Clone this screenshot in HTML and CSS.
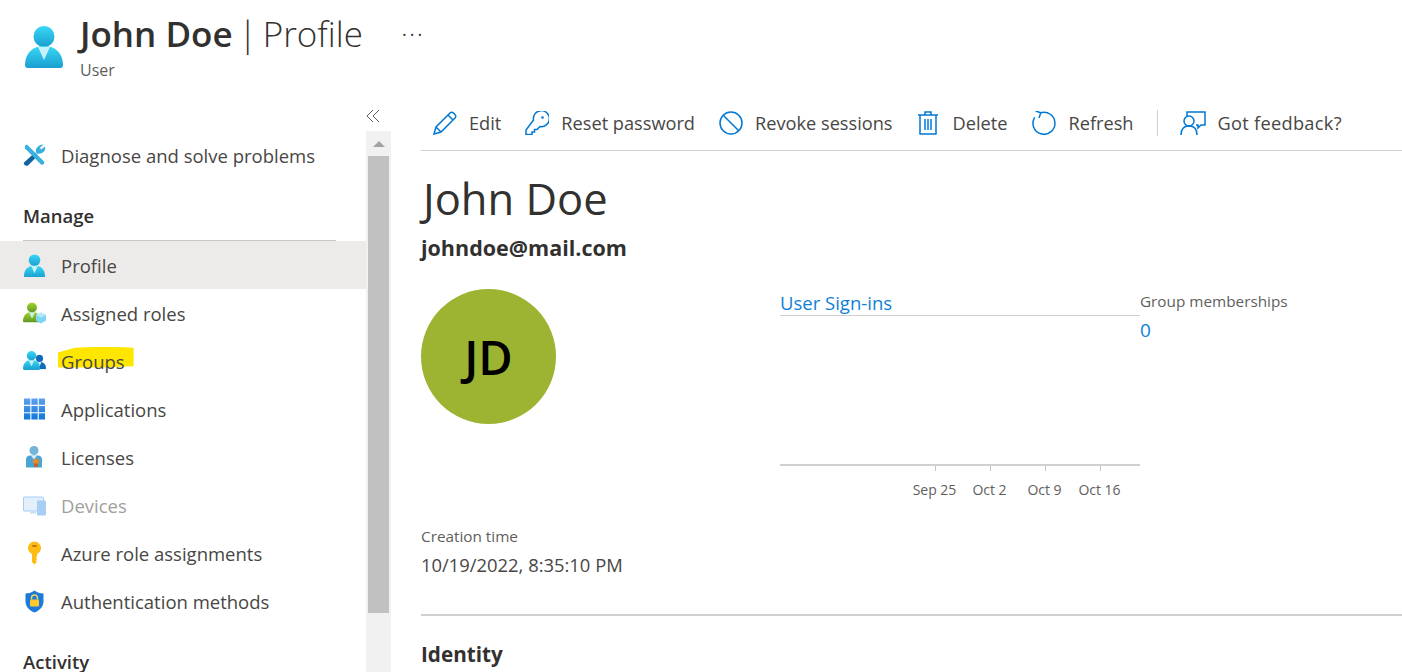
FILE: index.html
```html
<!DOCTYPE html>
<html lang="en">
<head>
    <meta charset="UTF-8">
    <meta name="viewport" content="width=device-width, initial-scale=1.0">
    <title>John Doe | Profile</title>
    <link rel="stylesheet" href="styles.css">
</head>
<body>
    <svg class="defs" width="0" height="0" aria-hidden="true">
        <defs>
            <linearGradient id="blue-user" x1="0" y1="0" x2="0" y2="1">
                <stop offset="0" stop-color="#37d8f6"/>
                <stop offset="1" stop-color="#1b9fd0"/>
            </linearGradient>
            <linearGradient id="green-user" x1="0" y1="0" x2="0" y2="1">
                <stop offset="0" stop-color="#a5d62b"/>
                <stop offset="1" stop-color="#5e9624"/>
            </linearGradient>
            <linearGradient id="tile" x1="0" y1="0" x2="0" y2="1">
                <stop offset="0" stop-color="#5ea0ef"/>
                <stop offset="1" stop-color="#0f78d8"/>
            </linearGradient>
            <symbol id="person" viewBox="0 0 38 42">
                <circle cx="19" cy="10.500" r="10.500"/>
                <path d="M0 39C0 27 8 20 19 20s19 7 19 19c0 2-1 3-3 3H3c-2 0-3-1-3-3z"/>
                <path d="M13 21h12l-6 13z" fill="#c8f1fa"/>
            </symbol>
        </defs>
    </svg>

    <header class="page-header">
        <svg class="header-icon"><use href="#person" fill="url(#blue-user)"/></svg>
        <div class="header-text">
            <h1 class="page-title"><b>John Doe</b> | Profile</h1>
            <div class="page-sub">User</div>
        </div>
        <div class="header-more">&#183;&#183;&#183;</div>
    </header>

    <div class="layout">
        <aside class="sidebar">
            <div class="collapse-row">
                <svg width="14" height="14" viewBox="0 0 14 14" fill="none" stroke="#605e5c"><path d="M7 1 1 7l6 6M13 1 7 7l6 6"/></svg>
            </div>
            <div class="sidebar-body">
                <nav class="nav">
                    <a class="nav-item nav-first">
                        <svg class="nav-icon" viewBox="0 0 23 23">
                            <path d="M1 19 12 9l3 3L5 22c-2 1-5-1-4-3z" fill="#13639e"/>
                            <path d="M2 2 4 1l17 17c1 2-1 4-3 3L2 5z" fill="#38b0e0"/>
                            <path d="M13 9c-1-5 3-8 8-8l-4 3 1 2 4-3c1 5-3 8-8 7z" fill="#38b0e0"/>
                        </svg>
                        Diagnose and solve problems
                    </a>
                    <div class="nav-heading">Manage</div>
                    <a class="nav-item nav-active">
                        <svg class="nav-icon"><use href="#person" x="1" y="1" width="21" height="24" fill="url(#blue-user)"/></svg>
                        Profile
                    </a>
                    <a class="nav-item">
                        <svg class="nav-icon" viewBox="0 0 23 23">
                            <use href="#person" x="0" y="1" width="18" height="20" fill="url(#green-user)"/>
                            <path d="m18 11 5 2.500v5.500l-5 3-5-3v-5.500z" fill="#7fd6f2"/>
                            <path d="m13 13.500 5 2.500 5-2.500-5-2.500z" fill="#b9eaf9"/>
                        </svg>
                        Assigned roles
                    </a>
                    <a class="nav-item">
                        <svg class="nav-icon" viewBox="0 0 23 23">
                            <use href="#person" x="10" y="5" width="13" height="15" fill="#0f6cbd"/>
                            <use href="#person" x="0" y="1" width="17" height="20" fill="url(#blue-user)"/>
                        </svg>
                        <span class="marked">Groups</span>
                    </a>
                    <a class="nav-item">
                        <svg class="nav-icon" viewBox="0 0 23 23" fill="url(#tile)">
                            <path d="M1 1h6.300v6.300H1zM8.400 1h6.300v6.300H8.400zM15.800 1h6.200v6.300h-6.200zM1 8.400h6.300v6.300H1zM8.400 8.400h6.300v6.300H8.400zM15.800 8.400h6.200v6.300h-6.200zM1 15.800h6.300V22H1zM8.400 15.800h6.300V22H8.400zM15.800 15.800h6.200V22h-6.200z"/>
                        </svg>
                        Applications
                    </a>
                    <a class="nav-item">
                        <svg class="nav-icon" viewBox="0 0 23 23">
                            <circle cx="11" cy="5" r="4.500" fill="#72b5d8"/>
                            <path d="M3 22v-8c0-3 2-4 4-4h8c2 0 4 1 4 4v8z" fill="#4aa5d6"/>
                            <path d="m8 10 3 4 3-4z" fill="#d6f0fa"/>
                            <circle cx="13" cy="16" r="3" fill="#e8892b"/>
                            <path d="M11 18h4v4l-2-1.500-2 1.500z" fill="#c8611c"/>
                        </svg>
                        Licenses
                    </a>
                    <a class="nav-item nav-disabled">
                        <svg class="nav-icon" viewBox="0 0 23 23">
                            <rect x="0.500" y="3.500" width="20" height="14" rx="1" fill="#e3f0fc" stroke="#a6cdf3"/>
                            <path d="M7 18h6v2H7z" fill="#c4dff7"/>
                            <rect x="14" y="7" width="9" height="15" rx="1" fill="#a9cef5"/>
                        </svg>
                        Devices
                    </a>
                    <a class="nav-item">
                        <svg class="nav-icon" viewBox="0 0 23 23">
                            <path d="M11.500 0C15 0 18 3 18 6.500c0 3-2 5-4 6V15l-1 1 1 1.500-1 1.500 .8 1.500L11.500 23 9 20.500v-8c-2-1-4-3-4-6C5 3 8 0 11.500 0z" fill="#fdbb14"/>
                            <rect x="9" y="3.500" width="5" height="2" rx="1" fill="#b97a06"/>
                        </svg>
                        Azure role assignments
                    </a>
                    <a class="nav-item">
                        <svg class="nav-icon" viewBox="0 0 23 23">
                            <path d="M11.500 1C14 3 17 4 20.500 4v8c0 5-4 9-9 11-5-2-9-6-9-11V4C6 4 9 3 11.500 1z" fill="#1c7ad9"/>
                            <path d="M8.500 10V8.500a3 3 0 0 1 6 0V10" fill="none" stroke="#f7d354" stroke-width="1.400"/>
                            <rect x="7" y="10" width="9" height="7" rx="1" fill="#fcc92e"/>
                        </svg>
                        Authentication methods
                    </a>
                    <div class="nav-heading nav-heading-last">Activity</div>
                </nav>
                <div class="scrollbar">
                    <div class="scroll-arrow"></div>
                    <div class="scroll-thumb"></div>
                </div>
            </div>
        </aside>

        <main class="content">
            <div class="toolbar">
                <a class="tool">
                    <svg class="tool-icon" viewBox="0 0 24 24">
                        <path d="M1 23 3 16 17 2c1-1 2.500-1 3.500 0l1.500 1.500c1 1 1 2.500 0 3.500L8 21zM3 16l5 5M15 4l5 5"/>
                    </svg>
                    Edit
                </a>
                <a class="tool">
                    <svg class="tool-icon" viewBox="0 0 24 24">
                        <path d="M8.500 9a8 8 0 1 1 6.500 6.500L12 18.500H9.500V21H7v2.500H1V19z"/>
                        <circle cx="17.500" cy="6.500" r="1.300" fill="#0078d4" stroke="none"/>
                    </svg>
                    Reset password
                </a>
                <a class="tool">
                    <svg class="tool-icon" viewBox="0 0 24 24">
                        <circle cx="12" cy="12" r="11"/>
                        <path d="m4.500 4.500 15 15"/>
                    </svg>
                    Revoke sessions
                </a>
                <a class="tool tool-delete">
                    <svg class="tool-icon tool-icon-narrow" viewBox="0 0 20 24">
                        <path d="M0 4h20M7 4V1h6v3M2 4v19h16V4M7 8v11M10 8v11M13 8v11"/>
                    </svg>
                    Delete
                </a>
                <a class="tool tool-refresh">
                    <svg class="tool-icon" viewBox="0 0 24 24">
                        <path d="M8.500 1.800a11 11 0 1 1-5.800 4.500M3.500 0l5.300 1.700L7 7"/>
                    </svg>
                    Refresh
                </a>
                <div class="tool-divider"></div>
                <a class="tool tool-feedback">
                    <svg class="tool-icon tool-icon-wide" viewBox="0 0 26 24">
                        <path d="M7 5V1h18v13h-4l-3 3v-3h-2M1 24c0-6 3-9 8-9s8 3 8 9"/>
                        <circle cx="9" cy="10" r="5"/>
                    </svg>
                    Got feedback?
                </a>
            </div>

            <h2 class="user-name">John Doe</h2>
            <div class="user-mail">johndoe@mail.com</div>

            <section class="overview">
                <div class="avatar-col">
                    <div class="avatar">JD</div>
                </div>
                <div class="chart">
                    <a class="chart-title">User Sign-ins</a>
                    <div class="chart-plot"></div>
                    <div class="chart-axis">
                        <div class="chart-tick">Sep 25</div>
                        <div class="chart-tick">Oct 2</div>
                        <div class="chart-tick">Oct 9</div>
                        <div class="chart-tick">Oct 16</div>
                    </div>
                </div>
                <div class="stat">
                    <div class="stat-label">Group memberships</div>
                    <a class="stat-value">0</a>
                </div>
            </section>

            <div class="created">
                <div class="created-label">Creation time</div>
                <div class="created-value">10/19/2022, 8:35:10 PM</div>
            </div>

            <h3 class="section-title">Identity</h3>
        </main>
    </div>
</body>
</html>
```

FILE: styles.css
```css
/* Page */
body {
    margin: 0;
    width: 1402px;
    height: 672px;
    overflow: hidden;
    background: #fff;
    color: #323130;
    font-family: "Open Sans", "Noto Sans", sans-serif;
}

.defs {
    display: block;
}

a {
    color: inherit;
}

/* Header */
.page-header {
    display: flex;
    height: 104px;
    padding-left: 25px;
    box-sizing: border-box;
}

.header-icon {
    width: 38px;
    height: 42px;
    margin-top: 26px;
    flex: none;
}

.header-text {
    margin-left: 17px;
    padding-top: 11px;
}

.page-title {
    margin: 0;
    font-size: 35px;
    line-height: 46px;
    font-weight: 300;
    word-spacing: -3.500px;
    white-space: nowrap;
}

.page-title b {
    font-weight: 600;
    word-spacing: 0;
}

.page-sub {
    margin-top: 1px;
    font-size: 16px;
    line-height: 24px;
    color: #605e5c;
}

.header-more {
    margin: 22px 0 0 39px;
    font-size: 18px;
    line-height: 24px;
    letter-spacing: 3px;
    color: #323130;
}

/* Two column layout */
.layout {
    display: grid;
    grid-template-columns: 391px 981px;
    column-gap: 30px;
}

/* Sidebar */
.collapse-row {
    height: 24px;
    width: 381px;
    display: flex;
    justify-content: flex-end;
    align-items: center;
    box-sizing: border-box;
    padding-right: 1px;
}

.sidebar-body {
    display: grid;
    grid-template-columns: 366px 25px;
}

.nav {
    height: 544px;
    overflow: hidden;
}

.nav-item {
    display: flex;
    align-items: center;
    height: 48px;
    box-sizing: border-box;
    padding-left: 23px;
    font-size: 18.500px;
    color: #484644;
}

.nav-first {
    margin-top: 3px;
}

.nav-icon {
    width: 23px;
    height: 24px;
    margin-right: 15px;
    flex: none;
}

.nav-active {
    background: #edebe9;
}

.nav-disabled {
    color: #a19f9d;
}

.nav-heading {
    margin: 14px 30px 0 23px;
    height: 48px;
    line-height: 46px;
    box-sizing: border-box;
    border-bottom: 1px solid #c8c6c4;
    font-size: 18.500px;
    font-weight: 600;
    color: #323130;
}

.nav-heading-last {
    border-bottom: 0;
    margin-top: 14px;
}

.marked {
    position: relative;
    z-index: 0;
}

/* Hand drawn highlighter stroke over the word */
.marked::before {
    content: "";
    position: absolute;
    z-index: -1;
    left: -3px;
    right: -9px;
    top: -2px;
    bottom: 6px;
    background: #ffe600;
    clip-path: polygon(0 28%, 22% 6%, 65% 0, 100% 6%, 100% 94%, 60% 100%, 0 100%);
}

.scrollbar {
    background: #f1f1f1;
    height: 541px;
    margin-top: 3px;
    padding: 0 2px;
    box-sizing: border-box;
}

.scroll-arrow {
    height: 25px;
    display: flex;
    justify-content: center;
    align-items: center;
}

.scroll-arrow::before {
    content: "";
    border: 6px solid transparent;
    border-top: 0;
    border-bottom: 6px solid #a3a3a3;
}

.scroll-thumb {
    height: 457px;
    background: #c1c1c1;
}

/* Content */
.toolbar {
    display: flex;
    align-items: center;
    height: 47px;
    box-sizing: border-box;
    padding: 0 0 8px 12px;
    border-bottom: 1px solid #d2d0ce;
    font-size: 18.200px;
    color: #484644;
}

.tool {
    display: flex;
    align-items: center;
    gap: 12px;
    margin-right: 24px;
    white-space: nowrap;
}

.tool-delete {
    gap: 15px;
    margin: 0 25px 0 1px;
}

.tool-refresh {
    margin-right: 23px;
}

.tool-feedback {
    letter-spacing: 0.300px;
}

.tool-icon {
    width: 24px;
    height: 24px;
    flex: none;
    fill: none;
    stroke: #0078d4;
    stroke-width: 1.500;
}

.tool-icon-narrow {
    width: 20px;
}

.tool-icon-wide {
    width: 26px;
}

.tool-divider {
    width: 1px;
    height: 26px;
    background: #d2d0ce;
    margin-right: 22px;
}

.user-name {
    margin: 20px 0 0 2px;
    font-size: 43.500px;
    line-height: 56px;
    font-weight: 400;
    color: #323130;
}

.user-mail {
    margin-top: 7px;
    font-size: 21.500px;
    line-height: 28px;
    font-weight: 700;
    color: #323130;
}

.overview {
    display: grid;
    grid-template-columns: 359px 360px 1fr;
    margin-top: 27px;
    height: 236px;
}

.avatar {
    width: 135px;
    height: 135px;
    border-radius: 50%;
    background: #9cb432;
    color: #000;
    font-size: 47px;
    font-weight: 600;
    display: flex;
    align-items: center;
    justify-content: center;
}

.chart-title {
    display: block;
    font-size: 18.500px;
    line-height: 28px;
    height: 26px;
    border-bottom: 1px solid #d2d0ce;
    color: #0f7fd6;
}

.chart-plot {
    height: 148px;
    border-bottom: 2px solid #d2d0ce;
}

.chart-axis {
    display: grid;
    grid-template-columns: repeat(4, 55px);
    padding-left: 127px;
}

.chart-tick {
    font-size: 14px;
    line-height: 20px;
    padding-top: 14px;
    text-align: center;
    color: #605e5c;
    white-space: nowrap;
    position: relative;
}

/* small tick above each date */
.chart-tick::before {
    content: "";
    position: absolute;
    top: 0;
    left: 50%;
    width: 1px;
    height: 5px;
    background: #c8c6c4;
}

.stat-label {
    font-size: 15.300px;
    line-height: 24px;
    color: #605e5c;
}

.stat-value {
    display: block;
    margin-top: 4px;
    font-size: 19px;
    line-height: 26px;
    color: #0f7fd6;
}

.created-label {
    font-size: 15.300px;
    line-height: 22px;
    color: #605e5c;
}

.created-value {
    margin-top: 5px;
    font-size: 18.400px;
    line-height: 26px;
    color: #484644;
}

.created {
    padding-bottom: 36px;
    border-bottom: 2px solid #d2d0ce;
}

.section-title {
    margin: 24px 0 0;
    font-size: 20.700px;
    line-height: 28px;
    font-weight: 700;
    color: #323130;
}
```
